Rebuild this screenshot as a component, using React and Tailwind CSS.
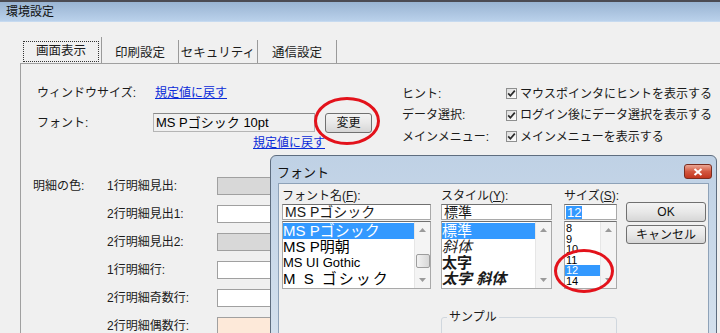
import React from 'react';

const font = "font-['Liberation_Sans','Noto_Sans_CJK_JP',sans-serif]";

const Check = () => (
    <span className="w-[11px] h-[11px] border border-[#8e8f8f] bg-gradient-to-br from-[#dcdcdc] to-white flex items-center justify-center">
        <svg width="9" height="9" viewBox="0 0 9 9">
            <path d="M1.2 4.4 L3.4 6.8 L7.8 1.6" stroke="#2a2a2a" strokeWidth="1.7" fill="none" />
        </svg>
    </span>
);

const Arrow = ({ up }) => (
    <svg width="7" height="4" viewBox="0 0 7 4">
        <path d={up ? 'M0 4 L3.5 0 L7 4 Z' : 'M0 0 L3.5 4 L7 0 Z'} fill="#9a9a9a" />
    </svg>
);

const ScrollBar = ({ thumb }) => (
    <div className="w-[16px] h-full bg-[#f4f4f4] border-l border-[#e6e6e6] flex flex-col items-center justify-between py-[6px]">
        <Arrow up />
        {thumb && <div className="w-[14px] h-[14px] mt-[22px] mb-auto border border-[#9d9d9d] rounded-[2px] bg-gradient-to-r from-[#f2f2f2] to-[#d8d8d8]" />}
        <Arrow />
    </div>
);

const WinButton = ({ children, className }) => (
    <div className={`border border-[#707070] rounded-[3px] bg-gradient-to-b from-[#f3f3f3] via-[#e8e8e8] to-[#d6d6d6] flex items-center justify-center text-[12px] leading-none text-[#111] ${className}`}>
        {children}
    </div>
);

const Tab = ({ children, width }) => (
    <div className={`${width} h-[23px] pt-[3px] border-r border-[#9a9a9a] flex items-center justify-center text-[12.5px] text-[#1b1b1b]`}>
        {children}
    </div>
);

const colorRows = [
    { label: '1行明細見出:', color: 'bg-[#d8d8d8]' },
    { label: '2行明細見出1:', color: 'bg-white' },
    { label: '2行明細見出2:', color: 'bg-[#d8d8d8]' },
    { label: '1行明細行:', color: 'bg-white' },
    { label: '2行明細奇数行:', color: 'bg-white' },
    { label: '2行明細偶数行:', color: 'bg-[#fde9d9]' },
];

const sizes = ['8', '9', '10', '11', '12', '14'];

const FontDialog = () => (
    <div className="absolute left-[270px] top-[155px] w-[447px] h-[200px] border border-[#5e6d7f] rounded-t-[6px] bg-gradient-to-b from-[#bfd1e5] to-[#d6e2ee] px-[7px]">
        <div className="h-[27px] flex items-start justify-between">
            <span className="mt-[10px] -ml-[1px] text-[13px] leading-none text-[#111]">フォント</span>
            <div className="mt-[8px] -mr-[3px] w-[28px] h-[15px] border border-[#7a2d20] rounded-[3px] bg-gradient-to-b from-[#eaa695] via-[#d3573f] to-[#c2351d] flex items-center justify-center">
                <svg width="10" height="8" viewBox="0 0 10 8">
                    <path d="M1.5 1 L8.5 7 M8.5 1 L1.5 7" stroke="white" strokeWidth="2" />
                </svg>
            </div>
        </div>
        <div className="h-[180px] border border-[#8ea2b8] bg-[#f0f0f0] pl-[3px] pt-[5px]">
            <div className="flex">
                <div className="w-[149px]">
                    <div className="h-[14px] text-[12px] leading-[14px] whitespace-nowrap">フォント名(<u>F</u>):</div>
                    <div className="mt-[1px] h-[16px] bg-white border border-[#a9a9a9] border-t-[#707070] text-[14px] leading-[14px] pl-[2px]">MS Pゴシック</div>
                    <div className="mt-[1px] h-[68px] bg-white border border-[#a9a9a9] border-t-[#707070] flex overflow-hidden">
                        <div className="flex-1 pt-[1px]">
                            <div className="h-[16px] bg-[#3399ff] text-white text-[15px] leading-[16px]">MS Pゴシック</div>
                            <div className="h-[16px] text-[15px] leading-[16px] text-black">MS P明朝</div>
                            <div className="h-[16px] text-[13px] leading-[16px] text-black">MS UI Gothic</div>
                            <div className="h-[16px] text-[15px] leading-[16px] text-black tracking-[2px]">M S ゴシック</div>
                        </div>
                        <ScrollBar thumb />
                    </div>
                </div>
                <div className="w-[111px] ml-[10px]">
                    <div className="h-[14px] text-[12px] leading-[14px] whitespace-nowrap">スタイル(<u>Y</u>):</div>
                    <div className="mt-[1px] h-[16px] bg-white border border-[#a9a9a9] border-t-[#707070] text-[14px] leading-[14px] pl-[2px]">標準</div>
                    <div className="mt-[1px] h-[68px] bg-white border border-[#a9a9a9] border-t-[#707070] flex overflow-hidden">
                        <div className="flex-1 pt-[1px]">
                            <div className="h-[16px] bg-[#3399ff] text-white text-[15px] leading-[16px]">標準</div>
                            <div className="h-[16px] text-[15px] leading-[16px] italic">斜体</div>
                            <div className="h-[16px] text-[15px] leading-[16px] font-bold">太字</div>
                            <div className="h-[16px] text-[15px] leading-[16px] font-bold italic">太字 斜体</div>
                        </div>
                        <ScrollBar />
                    </div>
                </div>
                <div className="w-[53px] ml-[12px]">
                    <div className="h-[14px] text-[12px] leading-[14px] whitespace-nowrap">サイズ(<u>S</u>):</div>
                    <div className="mt-[1px] h-[16px] bg-white border border-[#a9a9a9] border-t-[#707070] pl-[1px] flex items-center">
                        <span className="bg-[#3399ff] text-white text-[13px] leading-[13px] px-[1px]">12</span>
                    </div>
                    <div className="mt-[1px] h-[68px] bg-white border border-[#a9a9a9] border-t-[#707070] flex overflow-hidden">
                        <div className="flex-1 pt-[1px]">
                            {sizes.map((s) => (
                                <div
                                    key={s}
                                    className={`h-[10.5px] text-[11px] leading-[10.5px] pl-[1px] ${s === '12' ? 'bg-[#3399ff] text-white' : 'text-black'}`}
                                >
                                    {s}
                                </div>
                            ))}
                        </div>
                        <ScrollBar />
                    </div>
                </div>
                <div className="w-[80px] ml-[9px] pt-[13px]">
                    <WinButton className="h-[20px]">OK</WinButton>
                    <WinButton className="h-[19px] mt-[3px]">キャンセル</WinButton>
                </div>
            </div>
            <fieldset className="ml-[159px] mt-[22px] w-[176px] h-[60px] border border-[#d0d7de] rounded-[3px]">
                <legend className="ml-[5px] px-[2px] text-[12px] leading-[12px]">サンプル</legend>
            </fieldset>
        </div>
    </div>
);

const App = () => {
    return (
        <div className={`relative w-[720px] h-[333px] overflow-hidden bg-[#f0f0f0] text-[#1a1a1a] ${font}`}>
            {/* title bar */}
            <div className="h-[22px] border-t-2 border-[#4b4b53] border-b border-b-[#c6daf0] bg-gradient-to-b from-[#99b4d2] to-[#bad1eb] pl-[6px] flex items-center text-[12px] text-[#111]">
                環境設定
            </div>

            {/* tabs */}
            <div className="mt-[15px] pl-[21px] h-[26px] flex items-end">
                <div className="w-[81px] h-[26px] border-r border-[#9a9a9a] pt-[4px] px-[2px] pb-[1px]">
                    <div className="h-full border border-dotted border-[#333] flex items-center justify-center text-[12.5px] text-[#1b1b1b]">
                        画面表示
                    </div>
                </div>
                <Tab width="w-[77px]">印刷設定</Tab>
                <Tab width="w-[79px]">セキュリティ</Tab>
                <Tab width="w-[79px]">通信設定</Tab>
            </div>

            {/* panel */}
            <div className="ml-[20px] border-t border-l border-[#a0a0a0] h-[300px] pl-[16px] text-[12px]">
                <div className="flex">
                    <div className="w-[365px]">
                        <div className="mt-[19px] h-[20px] flex items-center">
                            <span className="w-[118px]">ウィンドウサイズ:</span>
                            <span className="text-[#0a2bd8] underline">規定値に戻す</span>
                        </div>
                        <div className="mt-[9px] h-[21px] flex items-center">
                            <span className="w-[116px]">フォント:</span>
                            <div className="w-[162px] h-[19px] border border-[#b5b5b5] border-t-[#8a8a8a] bg-[#f0f0f0] text-[13px] leading-[17px] pl-[2px] text-black">
                                MS Pゴシック 10pt
                            </div>
                            <WinButton className="ml-[10px] w-[47px] h-[20px]">変更</WinButton>
                        </div>
                        <div className="mt-[2px] h-[16px] pl-[216px] flex items-center">
                            <span className="text-[#0a2bd8] underline">規定値に戻す</span>
                        </div>
                    </div>
                    <div className="mt-[19px]">
                        {[
                            ['ヒント:', 'マウスポインタにヒントを表示する'],
                            ['データ選択:', 'ログイン後にデータ選択を表示する'],
                            ['メインメニュー:', 'メインメニューを表示する'],
                        ].map(([label, text]) => (
                            <div key={label} className="h-[21.5px] flex items-center">
                                <span className="w-[104px]">{label}</span>
                                <Check />
                                <span className="ml-[3px]">{text}</span>
                            </div>
                        ))}
                    </div>
                </div>

                <div className="mt-[21px] -ml-[4px] flex">
                    <div className="w-[74px] h-[28px] flex items-center">明細の色:</div>
                    <div>
                        {colorRows.map((row) => (
                            <div key={row.label} className="h-[28px] flex items-center">
                                <span className="w-[110px]">{row.label}</span>
                                <div className={`w-[90px] h-[18px] border border-[#a0a0a0] ${row.color}`} />
                            </div>
                        ))}
                    </div>
                </div>
            </div>

            <FontDialog />

            {/* red annotation circles */}
            <div className="absolute left-[314px] top-[97px] w-[66px] h-[48px] border-[3px] border-[#e3121b] rounded-[50%]" />
            <div className="absolute left-[554px] top-[249px] w-[60px] h-[44px] border-[3px] border-[#e3121b] rounded-[50%]" />
        </div>
    );
};

export default App;
